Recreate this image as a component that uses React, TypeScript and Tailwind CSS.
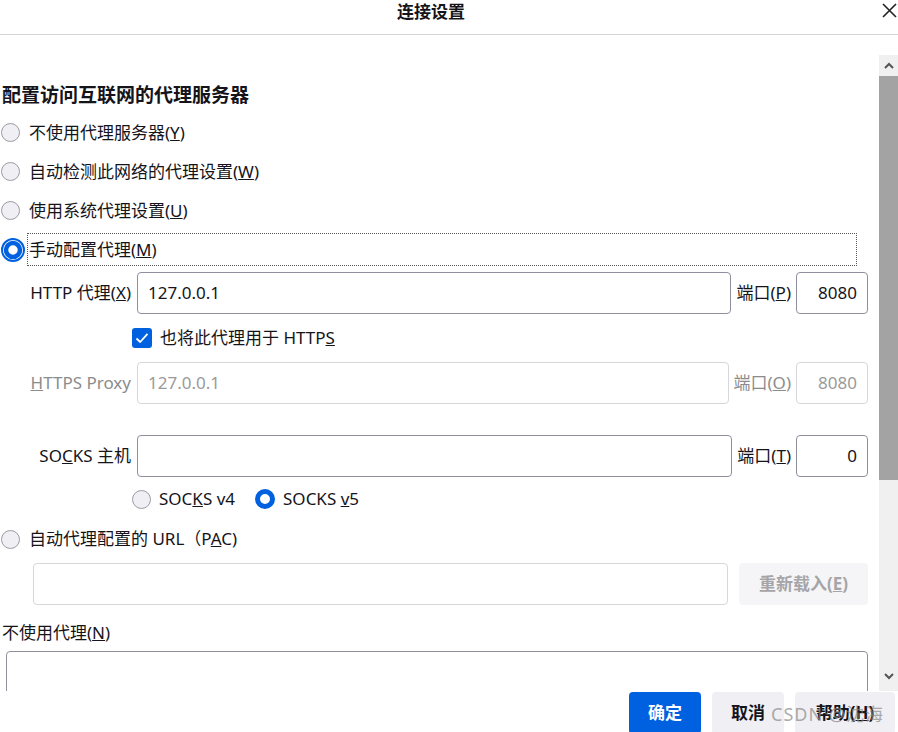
import type { ReactNode } from 'react';

const font = { fontFamily: "'Noto Sans', 'Noto Sans CJK SC', sans-serif" };

function Radio({ checked, focused }: { checked?: boolean; focused?: boolean }) {
  if (checked) {
    return (
      <svg width={focused ? 24 : 20} height={focused ? 24 : 20} viewBox={focused ? '0 0 24 24' : '0 0 20 20'} className="shrink-0">
        {focused ? (
          <>
            <circle cx="12" cy="12" r="11" fill="none" stroke="#0061e0" strokeWidth="2" />
            <circle cx="12" cy="12" r="7" fill="#fff" stroke="#0061e0" strokeWidth="4.5" />
          </>
        ) : (
          <circle cx="10" cy="10" r="7.5" fill="#fff" stroke="#0061e0" strokeWidth="5" />
        )}
      </svg>
    );
  }
  return <span className="block h-[19px] w-[19px] shrink-0 rounded-full border border-[#9a9aa6] bg-[#f0f0f4]" />;
}

function RadioRow({ children, checked, focused }: { children: ReactNode; checked?: boolean; focused?: boolean }) {
  return (
    <div className="flex h-[39px] items-center">
      <div className="flex w-[27px] items-center pl-[1px]">
        <Radio checked={checked} focused={focused} />
      </div>
      {focused ? (
        <div className="flex h-[33px] w-[830px] items-center border border-dotted border-[#555] pl-[1px]">{children}</div>
      ) : (
        <div className="pl-[2px]">{children}</div>
      )}
    </div>
  );
}

function Field({ value, disabled, align = 'left', className = '' }: { value?: string; disabled?: boolean; align?: 'left' | 'right'; className?: string }) {
  return (
    <div
      className={`flex h-full items-center rounded-[4px] border px-[10px] ${
        disabled ? 'border-[#d7d7db] text-[#9a9a9a]' : 'border-[#8f8f9d] text-[#15141a]'
      } ${align === 'right' ? 'justify-end' : ''} ${className}`}
    >
      {value}
    </div>
  );
}

function ProxyRow({
  label,
  value,
  portLabel,
  port,
  disabled,
}: {
  label: ReactNode;
  value?: string;
  portLabel: ReactNode;
  port: string;
  disabled?: boolean;
}) {
  return (
    <div className="flex h-[42px] items-stretch">
      <div className={`flex w-[133px] shrink-0 items-center justify-end pr-[2px] ${disabled ? 'text-[#8c8c8c]' : ''}`}>{label}</div>
      <Field value={value} disabled={disabled} className="ml-[4px] flex-1 pl-[10px]" />
      <div className={`flex items-center px-[5px] ${disabled ? 'text-[#8c8c8c]' : ''}`}>{portLabel}</div>
      <Field value={port} disabled={disabled} align="right" className="w-[72px] shrink-0" />
    </div>
  );
}

export default function App() {
  return (
    <div className="relative flex h-[732px] w-[898px] flex-col overflow-hidden bg-white text-[17px] text-[#15141a]" style={font}>
      {/* title bar */}
      <div className="flex h-[35px] shrink-0 border-b border-[#d4d4d4]">
        <div className="flex-1 pr-[20px] text-center text-[17px] font-bold leading-[24px]">连接设置</div>
        <div className="flex w-[16px] items-start pt-[3px]">
          <svg width="15" height="15" viewBox="0 0 15 15">
            <path d="M1 1 L14 14 M14 1 L1 14" stroke="#222" strokeWidth="1.6" fill="none" />
          </svg>
        </div>
      </div>

      {/* body */}
      <div className="flex h-[656px] shrink-0">
        <div className="flex-1 overflow-hidden pr-[11px]">
          <div className="mt-[47px] h-[26px] pl-[2px] text-[19px] font-bold leading-[26px]">配置访问互联网的代理服务器</div>
          <div className="mt-[5px]">
            <RadioRow>
              不使用代理服务器(<u>Y</u>)
            </RadioRow>
            <RadioRow>
              自动检测此网络的代理设置(<u>W</u>)
            </RadioRow>
            <RadioRow>
              使用系统代理设置(<u>U</u>)
            </RadioRow>
            <RadioRow checked focused>
              手动配置代理(<u>M</u>)
            </RadioRow>
          </div>

          <div className="mt-[3px]">
            <ProxyRow
              label={
                <>
                  HTTP 代理(<u>X</u>)
                </>
              }
              value="127.0.0.1"
              portLabel={
                <>
                  端口(<u>P</u>)
                </>
              }
              port="8080"
            />
          </div>

          <div className="flex h-[48px] items-center pl-[132px]">
            <span className="flex h-[20px] w-[20px] items-center justify-center rounded-[3px] bg-[#0061e0]">
              <svg width="14" height="14" viewBox="0 0 14 14">
                <path d="M1.5 7.5 L5.2 11 L12.5 2.8" stroke="#fff" strokeWidth="1.8" fill="none" strokeLinejoin="round" />
              </svg>
            </span>
            <span className="ml-[8px]">
              也将此代理用于 HTTP<u>S</u>
            </span>
          </div>

          <ProxyRow
            disabled
            label={
              <>
                <u>H</u>TTPS Proxy
              </>
            }
            value="127.0.0.1"
            portLabel={
              <>
                端口(<u>O</u>)
              </>
            }
            port="8080"
          />

          <div className="mt-[31px]">
            <ProxyRow
              label={
                <>
                  SO<u>C</u>KS 主机
                </>
              }
              portLabel={
                <>
                  端口(<u>T</u>)
                </>
              }
              port="0"
            />
          </div>

          <div className="flex h-[44px] items-center pl-[132px]">
            <Radio />
            <span className="ml-[8px]">
              SOC<u>K</u>S v4
            </span>
            <span className="ml-[20px]">
              <Radio checked />
            </span>
            <span className="ml-[8px]">
              SOCKS <u>v</u>5
            </span>
          </div>

          <div className="flex h-[36px] items-center">
            <div className="flex w-[27px] items-center pl-[1px]">
              <Radio />
            </div>
            <span className="pl-[2px]">
              自动代理配置的 URL（P<u>A</u>C)
            </span>
          </div>

          <div className="mt-[6px] flex h-[42px] items-stretch">
            <div className="ml-[33px] flex-1 rounded-[4px] border border-[#d7d7db]" />
            <div className="ml-[11px] flex w-[129px] items-center justify-center self-center rounded-[4px] bg-[#f5f5f7] py-[8px] font-bold text-[#a5a5a8]">
              重新载入(<u>E</u>)
            </div>
          </div>

          <div className="h-[46px] pl-[2px] pt-[16px] leading-[24px]">
            不使用代理(<u>N</u>)
          </div>
          <div className="ml-[6px] h-[90px] rounded-[4px] border border-[#8f8f9d]" />
        </div>

        {/* scrollbar */}
        <div className="mt-[20px] flex w-[19px] shrink-0 flex-col bg-[#f0f0f0]">
          <div className="flex h-[21px] items-center justify-center">
            <svg width="10" height="7" viewBox="0 0 10 7">
              <path d="M1 6 L5 2 L9 6" stroke="#555" strokeWidth="2" fill="none" />
            </svg>
          </div>
          <div className="h-[404px] bg-[#a3a3a3]" />
          <div className="flex-1" />
          <div className="flex h-[20px] items-start justify-center pt-[2px]">
            <svg width="10" height="7" viewBox="0 0 10 7">
              <path d="M1 1 L5 5 L9 1" stroke="#555" strokeWidth="2" fill="none" />
            </svg>
          </div>
        </div>
      </div>

      {/* footer */}
      <div className="flex flex-1 items-start justify-end gap-[11px] bg-white pr-[3px] pt-[1px]">
        <div className="flex h-[42px] w-[72px] items-center justify-center rounded-[4px] bg-[#0061e0] font-bold text-white">确定</div>
        <div className="flex h-[42px] w-[72px] items-center justify-center rounded-[4px] bg-[#f0f0f4] font-bold">取消</div>
        <div className="flex h-[42px] w-[100px] items-center justify-center rounded-[4px] bg-[#f0f0f4] font-bold">
          帮助(<u>H</u>)
        </div>
      </div>

      {/* watermark */}
      <div className="pointer-events-none absolute left-[771px] top-[701px] text-[18px] tracking-[1px] text-[#8a8a8a] opacity-70">CSDN @沈海</div>
    </div>
  );
}
